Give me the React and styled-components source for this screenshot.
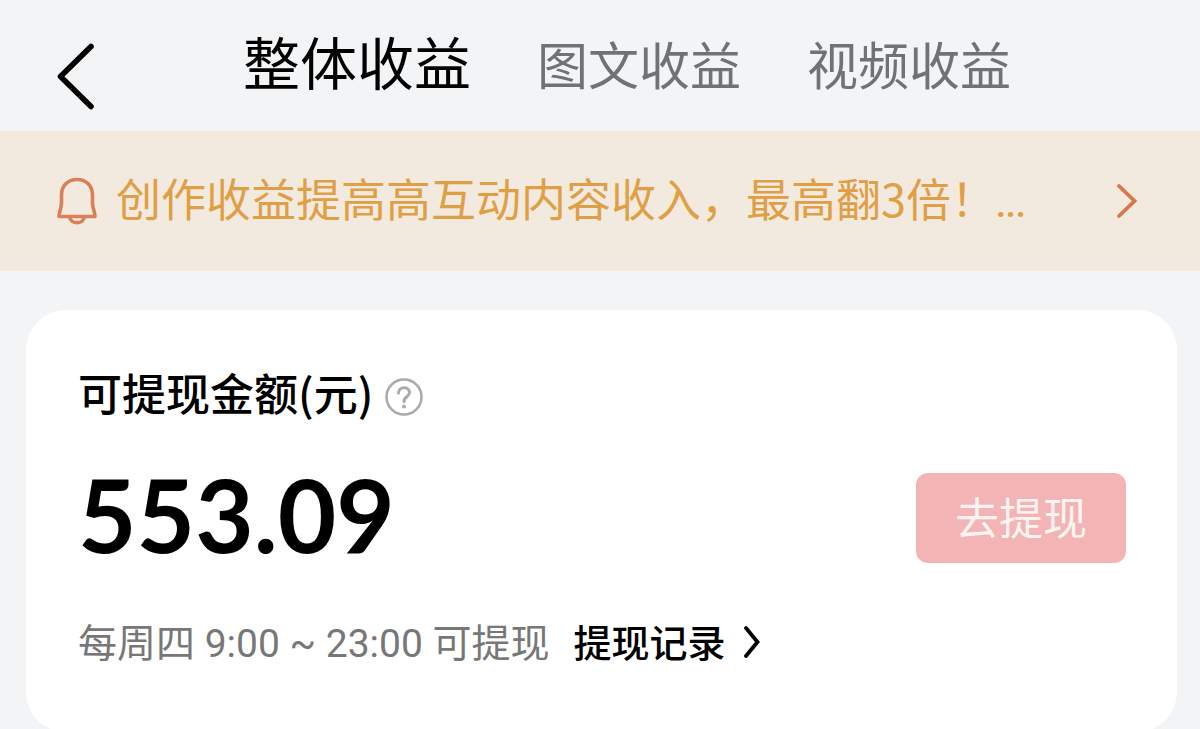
import React from "react";
import styled, { createGlobalStyle } from "styled-components";

const GlobalStyle = createGlobalStyle`
  * { box-sizing: border-box; }
  html { scrollbar-width: none; }
  body {
    margin: 0;
    background: #f3f4f6;
    color: #000;
    font-family: "Noto Sans CJK SC", sans-serif;
  }
  button { font: inherit; color: inherit; border: 0; padding: 0; background: none; }
  a { color: inherit; text-decoration: none; }
  svg { display: block; flex: none; }
`;

const Header = styled.header`
  display: flex;
  align-items: flex-start;
  padding: 24px 56px 0;
  height: 131px;
`;

const BackButton = styled.button`
  padding-top: 18px;
`;

const Tabs = styled.nav`
  display: flex;
  align-items: baseline;
  gap: 66px;
  margin-left: 147px;
`;

const Tab = styled.button`
  font-size: ${(p) => (p.$active ? 57 : 51)}px;
  line-height: 72px;
  color: ${(p) => (p.$active ? "#000" : "#717274")};
  white-space: nowrap;
`;

const Notice = styled.a`
  display: flex;
  align-items: center;
  height: 140px;
  padding: 0 60px 0 56px;
  background: #f3eadf;
  color: #e09f45;
`;

const NoticeText = styled.span`
  flex: 1;
  margin-left: 18px;
  font-size: 45px;
  line-height: 60px;
  white-space: nowrap;
`;

const Dots = styled.span`
  font-family: Roboto, sans-serif;
  font-size: 34px;
  font-weight: 700;
`;

const Card = styled.main`
  margin: 39px 23px 0 26px;
  padding: 52px 51px 58px 52px;
  border-radius: 40px;
  background: #fff;
`;

const CardTitle = styled.h1`
  display: flex;
  align-items: center;
  gap: 12px;
  margin: 0;
  font-size: 44px;
  font-weight: 500;
  line-height: 60px;
`;

const HelpButton = styled.button`
  padding-top: 10px;
`;

const AmountRow = styled.div`
  display: flex;
  align-items: center;
  justify-content: space-between;
  margin-top: 36px;
`;

const Amount = styled.strong`
  padding-bottom: 8px;
  font-family: Lato, sans-serif;
  font-size: 101px;
  font-weight: 700;
  line-height: 112px;
`;

const WithdrawButton = styled.button`
  padding: 13px 39px 17px;
  border-radius: 12px;
  background: #f2b4b4;
  color: #fff4f1;
  font-size: 44px;
  line-height: 60px;
`;

const Schedule = styled.div`
  display: flex;
  align-items: baseline;
  gap: 24px;
  margin-top: 33px;
  font-size: 38px;
  line-height: 60px;
  white-space: nowrap;
`;

const Hours = styled.span`
  font-family: Roboto, "Noto Sans CJK SC", sans-serif;
  font-size: 39px;
  color: #777;
`;

const RecordsLink = styled.a`
  display: flex;
  align-items: center;
  gap: 16px;
  font-weight: 500;
`;

const BackIcon = () => (
  <svg width="40" height="68" viewBox="0 0 40 68" fill="none" stroke="#000" strokeWidth="5.600" strokeLinecap="round" strokeLinejoin="round" aria-hidden="true">
    <path d="M35 4.500 L4.500 34.500 L35 64.500" />
  </svg>
);

const BellIcon = () => (
  <svg width="42" height="48" viewBox="0 0 42 48" fill="none" stroke="#d88158" strokeWidth="3.600" strokeLinejoin="round" strokeLinecap="round" aria-hidden="true">
    <path d="M21 2.500 C11 2.500 5.500 9.500 5.500 18 V26 C5.500 31 3 35 3 39.500 H39 C39 35 36.500 31 36.500 26 V18 C36.500 9.500 31 2.500 21 2.500 Z" />
    <path d="M13.500 40 C15 47.500 27 47.500 28.500 40" />
  </svg>
);

const NoticeArrow = () => (
  <svg width="24" height="36" viewBox="0 0 24 36" fill="none" stroke="#d9764a" strokeWidth="3.800" strokeLinecap="round" strokeLinejoin="miter" aria-hidden="true">
    <path d="M3 3 L18.500 18 L3 33" />
  </svg>
);

const HelpIcon = () => (
  <svg width="38" height="38" viewBox="0 0 38 38" fill="none" stroke="#aaa" strokeWidth="2.500" strokeLinecap="round" strokeLinejoin="round" aria-hidden="true">
    <circle cx="19" cy="19" r="17.500" />
    <path d="M13.500 15 C13.500 8 24.500 8 24.500 14.500 C24.500 19 19 18.500 19 23.500" strokeWidth="3" />
    <circle cx="19" cy="28.500" r="1.900" fill="#aaa" stroke="none" />
  </svg>
);

const RecordsArrow = () => (
  <svg width="20" height="34" viewBox="0 0 20 34" fill="none" stroke="#000" strokeWidth="3.800" strokeLinecap="round" strokeLinejoin="miter" aria-hidden="true">
    <path d="M4 4 L15.500 18 L4 32" />
  </svg>
);

export default function App() {
  return (
    <>
      <GlobalStyle />
      <Header>
        <BackButton type="button" aria-label="返回"><BackIcon /></BackButton>
        <Tabs>
          <Tab type="button" $active>整体收益</Tab>
          <Tab type="button">图文收益</Tab>
          <Tab type="button">视频收益</Tab>
        </Tabs>
      </Header>
      <Notice href="#notice">
        <BellIcon />
        <NoticeText>创作收益提高高互动内容收入，最高翻3倍！<Dots>...</Dots></NoticeText>
        <NoticeArrow />
      </Notice>
      <Card>
        <CardTitle>
          可提现金额(元)
          <HelpButton type="button" aria-label="说明"><HelpIcon /></HelpButton>
        </CardTitle>
        <AmountRow>
          <Amount>553.09</Amount>
          <WithdrawButton type="button">去提现</WithdrawButton>
        </AmountRow>
        <Schedule>
          <Hours>每周四 9:00 ~ 23:00 可提现</Hours>
          <RecordsLink href="#records">提现记录<RecordsArrow /></RecordsLink>
        </Schedule>
      </Card>
    </>
  );
}
